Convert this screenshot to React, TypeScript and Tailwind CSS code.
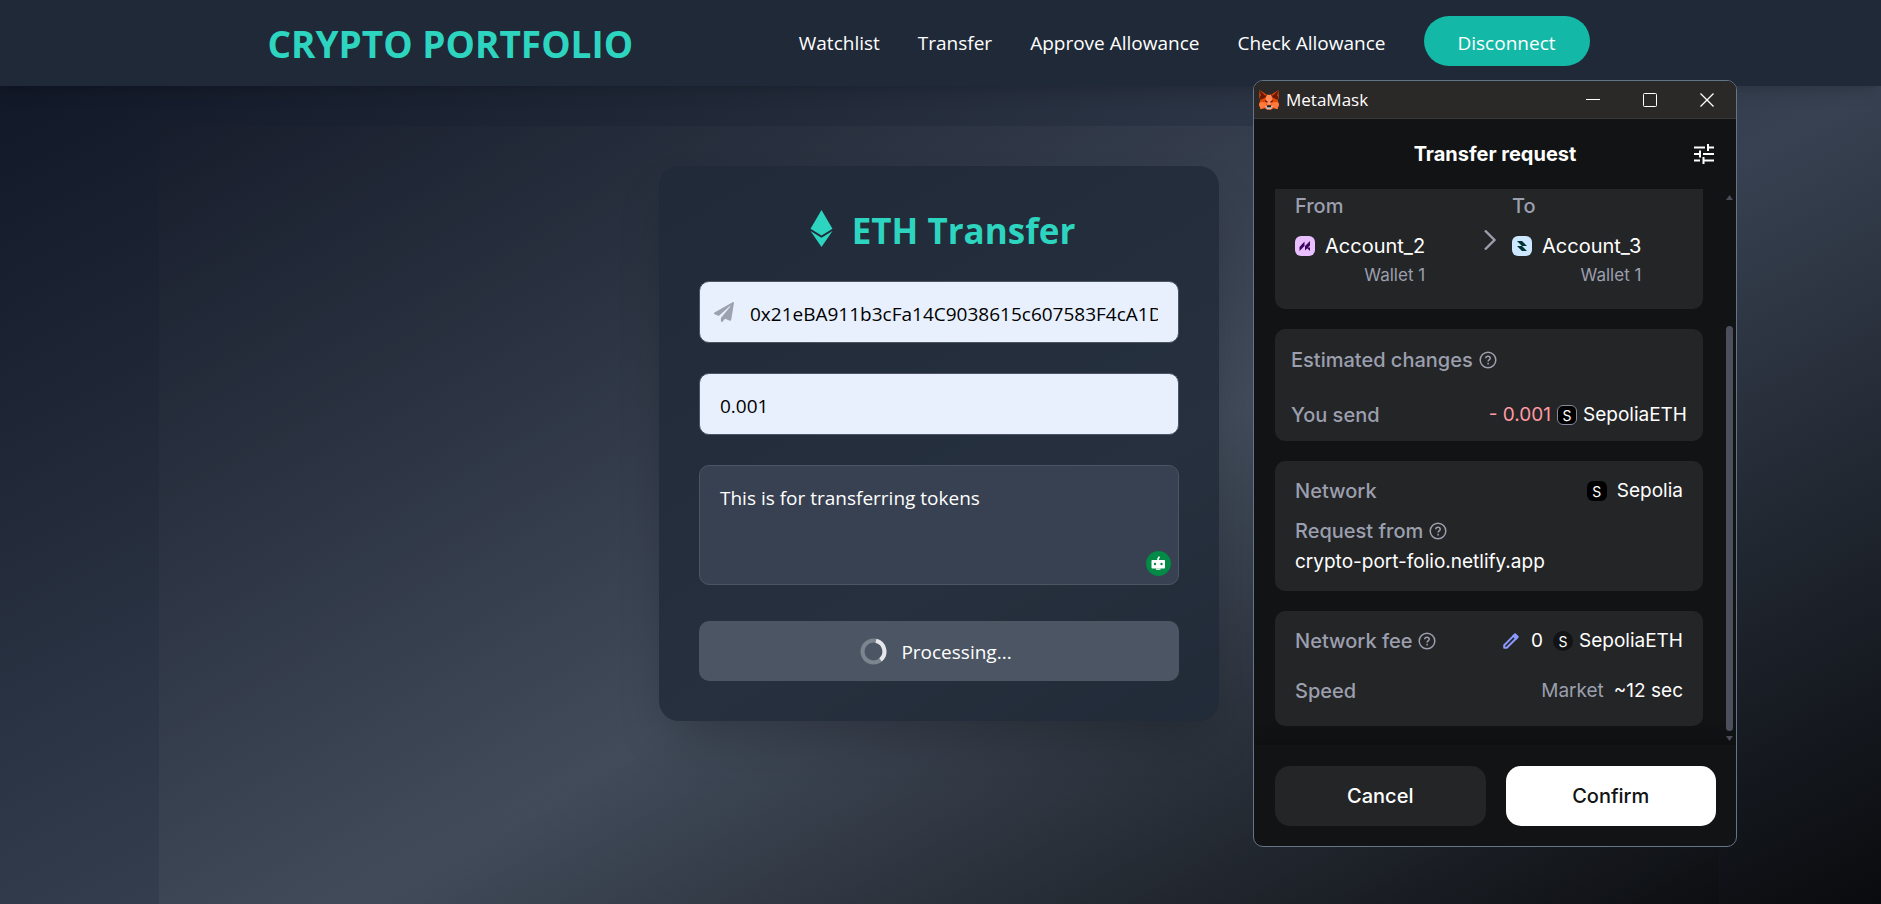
import { type ReactNode } from "react";
import { FaEthereum, FaPaperPlane } from "react-icons/fa";

const NAV_LINKS = ["Watchlist", "Transfer", "Approve Allowance", "Check Allowance"];

function Navbar() {
  return (
    <header className="relative z-10 bg-[#1f2937] shadow-lg">
      <div className="mx-auto flex h-[86px] max-w-[1346px] items-center justify-between pr-6">
        <h1 className="text-[37px] leading-none font-bold text-[#2dd4bf]">CRYPTO PORTFOLIO</h1>
        <nav className="flex items-center gap-[38px] text-[19px] text-white">
          {NAV_LINKS.map((label) => (
            <a key={label} href="#" className="whitespace-nowrap">
              {label}
            </a>
          ))}
          <button className="mb-1 h-[50px] w-[166px] rounded-full bg-[#14b8a6] pt-1 text-white">Disconnect</button>
        </nav>
      </div>
    </header>
  );
}

function Spinner() {
  return (
    <svg width="27" height="27" viewBox="0 0 27 27" fill="none">
      <circle cx="13.5" cy="13.5" r="11" stroke="#7b858f" strokeWidth="4" />
      <path d="M16 2.8a11 11 0 0 1 4.5 19.1" stroke="#e5e7eb" strokeWidth="4" />
    </svg>
  );
}

function RobotBadge() {
  return (
    <svg width="25" height="25" viewBox="0 0 25 25">
      <circle cx="12.5" cy="12.5" r="12.5" fill="#028a46" />
      <path d="M12 9.5V8l1.4-2.4" stroke="#fff" strokeWidth="1.6" fill="none" />
      <rect x="5.5" y="9" width="13.5" height="8.5" rx="0.8" fill="#fff" />
      <rect x="10" y="17.5" width="4.5" height="1.3" fill="#fff" />
      <circle cx="9" cy="13" r="1.2" fill="#028a46" />
      <circle cx="15.5" cy="13" r="1.2" fill="#028a46" />
    </svg>
  );
}

function TransferCard() {
  return (
    <section className="w-[560px] rounded-[20px] bg-[#1f2937]/80 p-10 shadow-2xl">
      <h2 className="mb-[30px] flex h-[45px] items-center justify-center gap-3 text-[35px] leading-none font-bold text-[#2dd4bf]">
        <FaEthereum size={37} />
        <span className="pt-1">ETH Transfer</span>
      </h2>
      <form className="text-[19px]" onSubmit={(e) => e.preventDefault()}>
        <div className="relative mb-[30px]">
          <FaPaperPlane size={20} className="absolute top-[21px] left-[15px] text-[#9ca3af]" />
          <input
            aria-label="Recipient address"
            defaultValue="0x21eBA911b3cFa14C9038615c607583F4cA1D2e07"
            className="block h-[62px] w-full rounded-[10px] border border-[#4b5563] bg-[#e8f0fe] pt-[3px] pr-5 pl-[50px] text-black outline-none"
          />
        </div>
        <input
          aria-label="Amount"
          defaultValue="0.001"
          className="mb-[30px] block h-[62px] w-full rounded-[10px] border border-[#4b5563] bg-[#e8f0fe] px-5 pt-[3px] text-black outline-none"
        />
        <div className="relative mb-9">
          <textarea
            aria-label="Remark"
            defaultValue="This is for transferring tokens"
            className="block h-[120px] w-full resize-none rounded-[10px] border border-[#4b5563] bg-[#374151] px-5 py-[18px] leading-7 text-white outline-none"
          />
          <span className="absolute right-2 bottom-[9px]">
            <RobotBadge />
          </span>
        </div>
        <button
          type="button"
          className="flex h-[60px] w-full items-center justify-center gap-[14px] rounded-[10px] bg-[#4b5563] pr-1.5 text-white"
        >
          <Spinner />
          <span className="pt-[3px]">Processing...</span>
        </button>
      </form>
    </section>
  );
}

function FoxLogo() {
  return (
    <svg width="20" height="20" viewBox="0 0 60 60">
      <path d="M2 1 24 14h12L58 1l1 22-3 8 4 13-5 14-12-3-7 4H24l-7-4-12 3L0 44l4-13-3-8z" fill="#ff5c16" />
      <path d="M2 1 24 15l-6 9-14 6-2-9 3-4z" fill="#6b1a02" />
      <path d="M58 1 36 15l6 9 14 6 2-9-3-4z" fill="#6b1a02" />
      <path d="m2 1 20 13-3 3zM58 1 38 14l3 3z" fill="#e34807" />
      <path d="M24 15h12l4 14-4 15H24l-4-15z" fill="#ff8d5d" />
      <path d="m4 32 14-8 5 10-4 3H3zM56 32l-14-8-5 10 4 3h16z" fill="#e34807" />
      <path d="M3 37h15l5 12-18 8-5-13zM57 37H42l-5 12 18 8 5-13z" fill="#ff7a3c" />
      <path d="m18 31 7 3 1 4-6-2zM42 31l-7 3-1 4 6-2z" fill="#4a1404" />
      <path d="m18 49 7-2h10l7 2-6 9H24z" fill="#c0c4cd" />
      <path d="M25 46h10l2 6H23z" fill="#2b1a12" />
    </svg>
  );
}

function TitleBar() {
  return (
    <div className="flex h-[38px] items-center border-b border-[#36383a] bg-[#2b2927] pr-px pl-[5px]">
      <FoxLogo />
      <span className="ml-[7px] flex-1 text-[17px] text-white">MetaMask</span>
      <button aria-label="Minimize" className="flex w-[57px] justify-center text-white">
        <svg width="14" height="14" viewBox="0 0 14 14" stroke="currentColor" fill="none">
          <path d="M0 6.5h14" />
        </svg>
      </button>
      <button aria-label="Maximize" className="flex w-[57px] justify-center text-white">
        <svg width="14" height="14" viewBox="0 0 14 14" stroke="currentColor" fill="none">
          <rect x="0.5" y="0.5" width="13" height="13" rx="1" />
        </svg>
      </button>
      <button aria-label="Close" className="flex w-[57px] justify-center text-white">
        <svg width="14" height="14" viewBox="0 0 14 14" stroke="currentColor" strokeWidth="1.3" fill="none">
          <path d="m.5.5 13 13M13.5.5l-13 13" />
        </svg>
      </button>
    </div>
  );
}

function SettingsIcon() {
  return (
    <svg width="20" height="20" viewBox="0 0 20 20" stroke="#fff" strokeWidth="2" fill="none">
      <path d="M0 3.5h11M14 0v7M14 3.5h6M0 10h6M6 6.5v7M9 10h11M0 16.5h6M9.5 13v7M9.5 16.5H20" />
    </svg>
  );
}

function HelpIcon() {
  return (
    <svg width="18" height="18" viewBox="0 0 18 18" fill="none" stroke="#9b9fae" strokeWidth="1.5">
      <circle cx="9" cy="9" r="7.8" />
      <path d="M6.8 7.3c0-1.3.9-2.1 2.2-2.1s2.2.8 2.2 2c0 1.6-2.1 1.7-2.1 3.3" />
      <path d="M9.1 11.8v1.6" />
    </svg>
  );
}

function PencilIcon() {
  return (
    <svg width="16" height="16" viewBox="0 0 16 16" fill="none" stroke="#8b99ff" strokeWidth="2" strokeLinejoin="round">
      <path d="M1.2 14.8v-2.6l9.3-9.3 2.6 2.6-9.3 9.3z" />
      <path d="m10.5 2.7 1.6-1.5 2.7 2.7-1.5 1.6z" fill="#8b99ff" />
    </svg>
  );
}

function Panel({ className, children }: { className: string; children: ReactNode }) {
  return <div className={`bg-[#242527] ${className}`}>{children}</div>;
}

function Row({ label, help, children }: { label: string; help?: boolean; children?: ReactNode }) {
  return (
    <div className="flex h-[30px] items-center justify-between">
      <span className="flex items-center gap-[6px] text-[20px] font-medium text-[#9b9fae]">
        {label}
        {help && <HelpIcon />}
      </span>
      {children}
    </div>
  );
}

function Account({ label, name, children }: { label: string; name: string; children: ReactNode }) {
  return (
    <div className="flex flex-col text-[20px]">
      <span className="h-[34px] leading-[34px] font-medium text-[#9b9fae]">{label}</span>
      <span className="flex h-[46px] items-center gap-[10px] text-white">
        {children}
        {name}
      </span>
      <span className="text-right text-[17px] leading-3 text-[#9b9fae]">Wallet 1</span>
    </div>
  );
}

function MetaMaskWindow() {
  return (
    <aside className="absolute top-[80px] right-[144px] z-20 w-[484px] overflow-hidden rounded-[10px] border border-[#64748b] bg-[#121314]">
      <TitleBar />
      <div className="font-['Inter',sans-serif] text-[19px]">
        <div className="relative flex h-[70px] items-center justify-center">
          <h2 className="text-[20px] font-bold text-white">Transfer request</h2>
          <button aria-label="Advanced details" className="absolute right-[22px]">
            <SettingsIcon />
          </button>
        </div>
        <div className="flex justify-between">
          <div className="ml-[21px] flex h-[556px] w-[428px] flex-col gap-5">
            <Panel className="flex h-[120px] rounded-b-[10px] px-5">
              <Account label="From" name="Account_2">
                <svg width="20" height="20" viewBox="0 0 20 20">
                  <rect width="20" height="20" rx="6" fill="#e9bfff" />
                  <path d="M4.5 11l5-5.500V10l-5 5zM10 10l5-5v4.500l-5 5zM11.500 11.500H15V15z" fill="#3d065f" />
                </svg>
              </Account>
              <svg className="mt-10 mr-[15px] ml-auto" width="14" height="22" viewBox="0 0 14 22" fill="none" stroke="#9b9fae" strokeWidth="2.4">
                <path d="m2 1.500 9.500 9.500L2 20.500" />
              </svg>
              <div className="w-[171px]">
                <div className="flex">
                  <Account label="To" name="Account_3">
                    <svg width="20" height="20" viewBox="0 0 20 20">
                      <rect width="20" height="20" rx="6" fill="#cce7ff" />
                      <path d="M5 5h5l5 5h-5zM5 10h5l5 5h-5z" fill="#013330" />
                    </svg>
                  </Account>
                </div>
              </div>
            </Panel>
            <Panel className="flex h-[112px] flex-col gap-[25px] rounded-[10px] px-4 pt-4">
              <Row label="Estimated changes" help />
              <Row label="You send">
                <span className="flex items-center gap-[6px] text-white">
                  <span className="text-[#ff9aa2]">- 0.001</span>
                  <span className="flex size-5 items-center justify-center rounded-[6px] border border-[#858b9a] bg-black text-[14px]">
                    S
                  </span>
                  SepoliaETH
                </span>
              </Row>
            </Panel>
            <Panel className="flex h-[130px] flex-col rounded-[10px] px-5 pt-[15px]">
              <Row label="Network">
                <span className="flex items-center gap-[10px] text-white">
                  <span className="flex size-5 items-center justify-center rounded-[6px] bg-black text-[14px]">S</span>
                  Sepolia
                </span>
              </Row>
              <div className="mt-[10px]">
                <Row label="Request from" help />
              </div>
              <span className="leading-8 text-white">crypto-port-folio.netlify.app</span>
            </Panel>
            <Panel className="flex h-[115px] flex-col gap-5 rounded-[10px] px-5 pt-[15px]">
              <Row label="Network fee" help>
                <span className="flex items-center text-white">
                  <button aria-label="Edit network fee">
                    <PencilIcon />
                  </button>
                  <span className="ml-3">0</span>
                  <span className="mr-[6px] ml-[10px] flex size-5 items-center justify-center rounded-full bg-[#121314] text-[14px]">
                    S
                  </span>
                  SepoliaETH
                </span>
              </Row>
              <Row label="Speed">
                <span className="flex gap-[10px] text-white">
                  <span className="text-[#9b9fae]">Market</span>
                  ~12 sec
                </span>
              </Row>
            </Panel>
          </div>
          <div className="mr-[3px] flex w-[7px] flex-col items-center pt-[6px] pb-1">
            <svg width="7" height="5" viewBox="0 0 7 5">
              <path d="M3.500 0 7 5H0z" fill="#4a4d57" />
            </svg>
            <div className="mt-auto mb-[5px] h-[405px] w-full rounded-full bg-[#4b505c]" />
            <svg width="7" height="5" viewBox="0 0 7 5">
              <path d="M3.500 5 7 0H0z" fill="#4a4d57" />
            </svg>
          </div>
        </div>
        <div className="flex gap-5 pt-[21px] pr-5 pb-5 pl-[21px] text-[20px] font-medium shadow-[0_-4px_12px_#0e0f10]">
          <button className="h-[60px] flex-1 rounded-[15px] bg-[#242527] text-white">Cancel</button>
          <button className="h-[60px] flex-1 rounded-[15px] bg-white text-[#121314]">Confirm</button>
        </div>
      </div>
    </aside>
  );
}

export default function App() {
  return (
    <div className="relative h-screen overflow-hidden bg-black font-['Open_Sans',sans-serif]">
      <Navbar />
      <main className="bg-linear-to-br/srgb from-[#111827] via-[#374151] to-black py-10 pr-[43px] pl-10">
        <div className="mx-auto flex min-h-screen max-w-[1560px] items-start justify-center bg-linear-to-br/srgb from-[#181d2b]/50 via-[#4b5563]/50 to-black/50 pt-10">
          <TransferCard />
        </div>
      </main>
      <MetaMaskWindow />
    </div>
  );
}
